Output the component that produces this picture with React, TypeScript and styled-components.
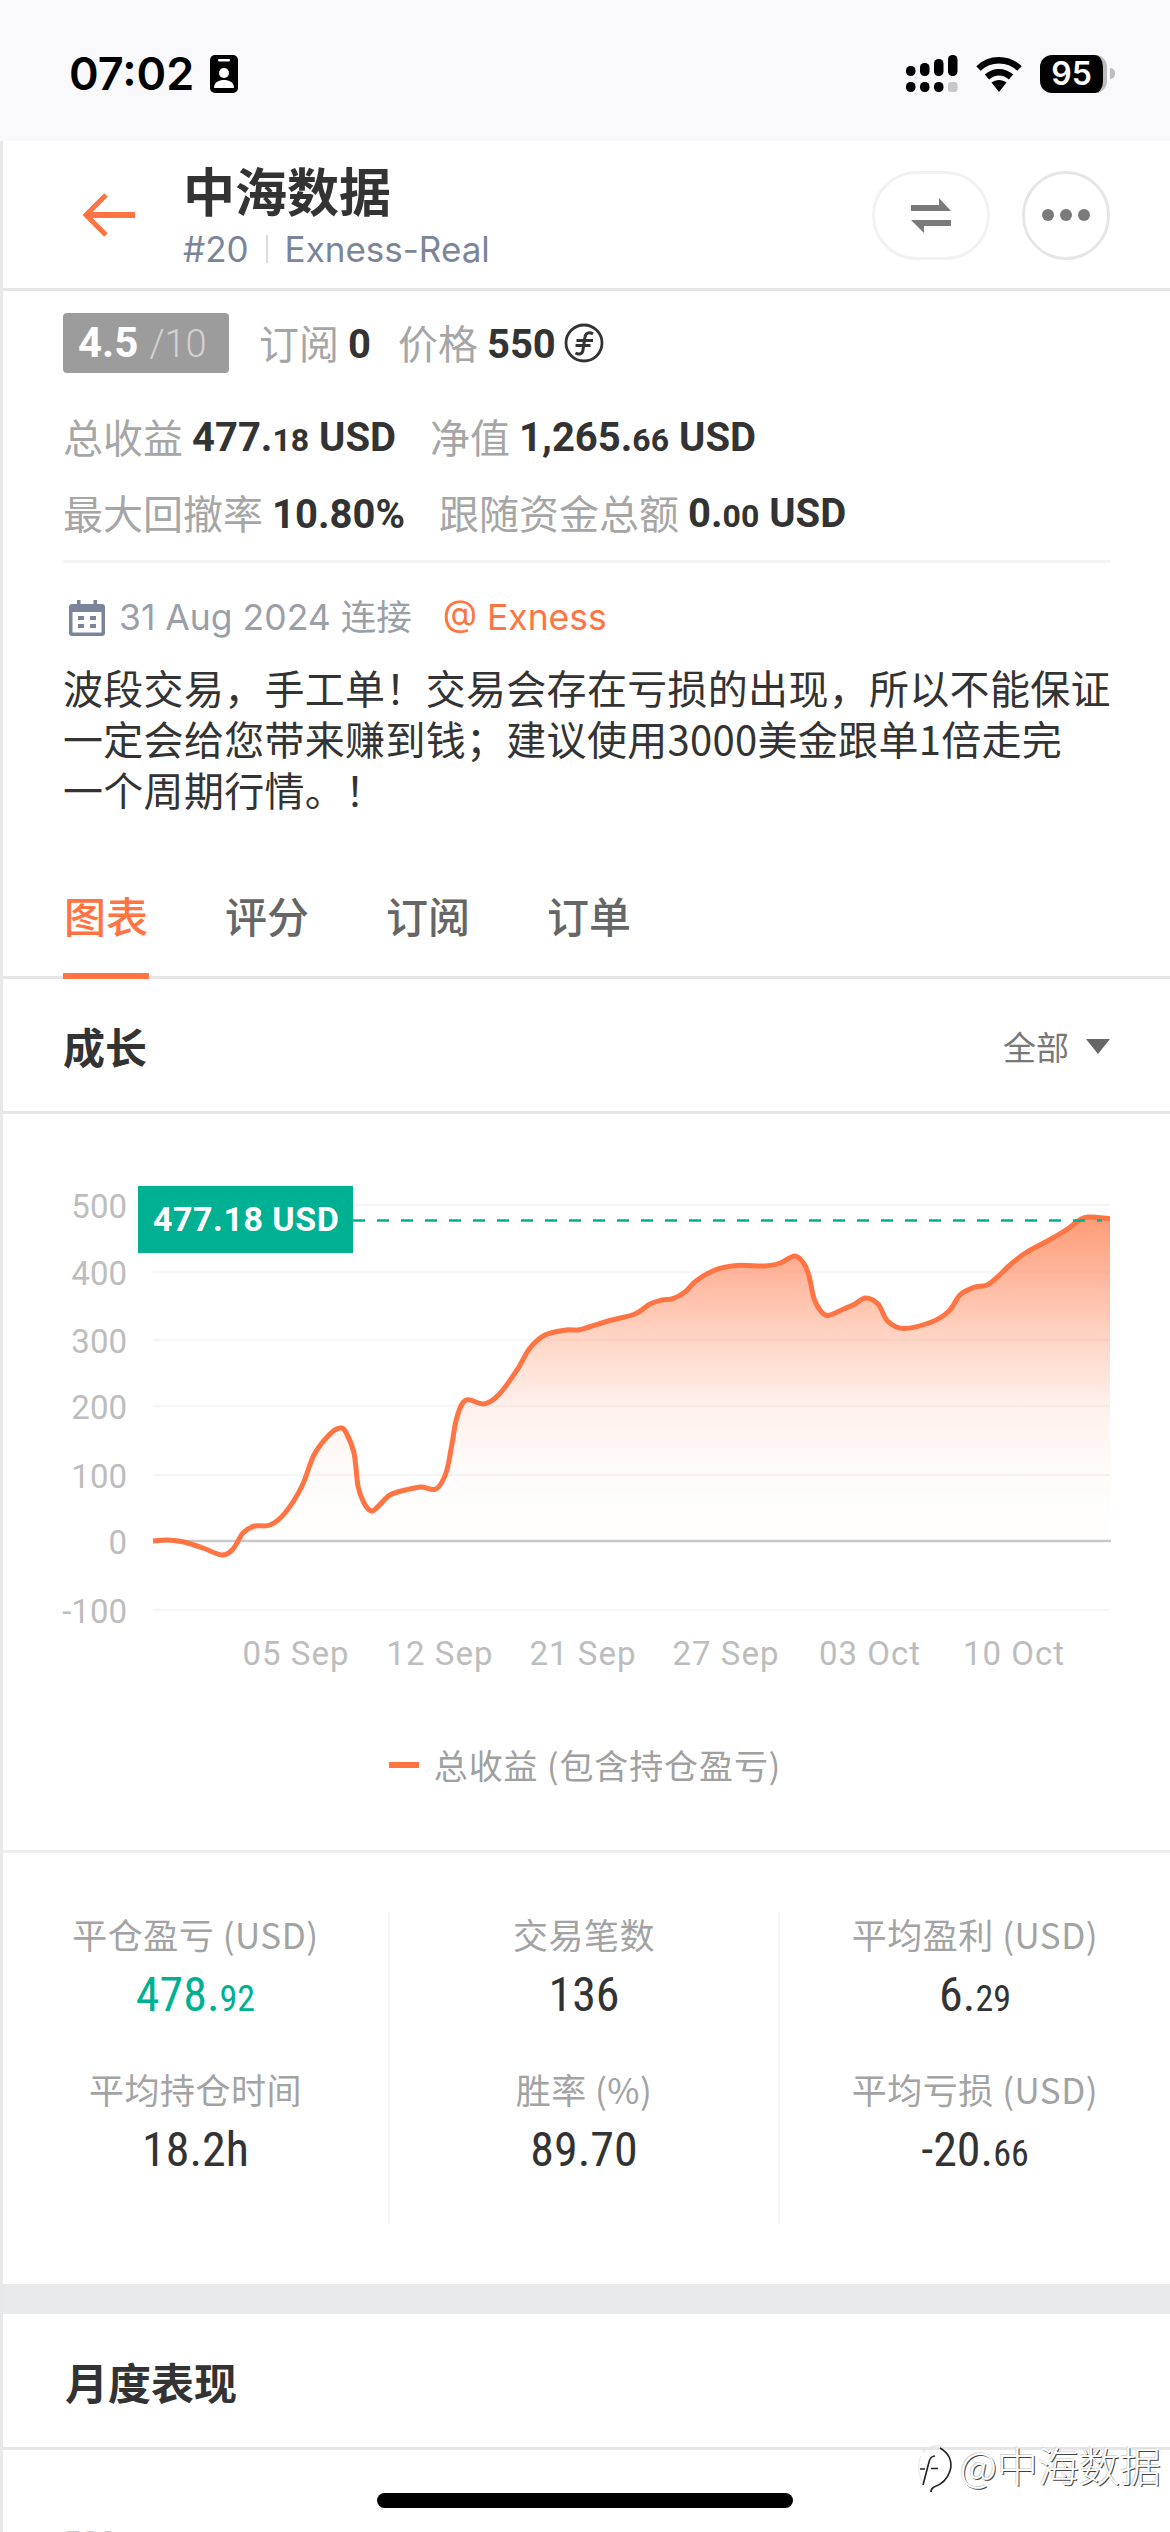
import { FC } from "react";
import styled, { createGlobalStyle } from "styled-components";

const ORANGE = "#ff7442";
const TEAL = "#00b092";
const CJK = `"Noto Sans CJK SC", sans-serif`;
const DIN = `Roboto, "Noto Sans CJK SC", sans-serif`;
const UI = `Inter, "Noto Sans CJK SC", sans-serif`;

const GlobalStyle = createGlobalStyle`
  html, body {
    margin: 0;
    padding: 0;
    width: 1170px;
    height: 2532px;
    overflow: hidden;
    background: #fff;
    font-family: ${CJK};
  }
`;

// profit curve, in page coordinates
const curve: [number, number][] = [
  [153, 1541], [168, 1540], [184, 1542], [203, 1548], [222, 1555], [233, 1549], [243, 1533],
  [254.5, 1526], [270, 1525], [285, 1513], [302, 1486], [314, 1455], [329, 1435], [340, 1428],
  [346, 1432.5], [354, 1453], [358, 1486], [363.5, 1502], [371, 1511], [377, 1507.5], [390, 1495],
  [405.6, 1490], [421, 1487], [436, 1489], [446, 1473], [451.6, 1446], [457, 1417], [466, 1400],
  [484, 1404], [499, 1394.5], [517, 1370], [530, 1348], [545, 1335], [566, 1330], [578, 1330],
  [589, 1327], [608, 1321], [635, 1314], [650, 1304], [662, 1300], [673, 1298.6], [685, 1292],
  [696, 1281], [715, 1270], [736.5, 1265.5], [765, 1266], [780.5, 1263], [794.6, 1256], [803.5, 1263],
  [809, 1276], [814, 1298.6], [820.7, 1311], [828, 1315.5], [843.6, 1309], [855, 1304], [865.4, 1298],
  [878, 1304], [887.6, 1321], [903, 1328.5], [931.6, 1322], [949, 1311], [960, 1295], [973.8, 1287.4],
  [987, 1285], [998.6, 1276], [1010, 1265], [1025.4, 1253], [1048.4, 1240.5], [1067.5, 1229],
  [1079, 1220.4], [1088.6, 1217], [1110, 1218.7],
];

const smoothPath = (pts: [number, number][]) => {
  let d = `M${pts[0][0]} ${pts[0][1]}`;
  for (let i = 0; i < pts.length - 1; i++) {
    const p0 = pts[i - 1] || pts[i];
    const p1 = pts[i];
    const p2 = pts[i + 1];
    const p3 = pts[i + 2] || p2;
    const c1x = p1[0] + (p2[0] - p0[0]) / 6;
    const c1y = p1[1] + (p2[1] - p0[1]) / 6;
    const c2x = p2[0] - (p3[0] - p1[0]) / 6;
    const c2y = p2[1] - (p3[1] - p1[1]) / 6;
    d += `C${c1x.toFixed(1)} ${c1y.toFixed(1)} ${c2x.toFixed(1)} ${c2y.toFixed(1)} ${p2[0]} ${p2[1]}`;
  }
  return d;
};

const linePath = smoothPath(curve);
const areaPath = `${linePath}L1110 1541L153 1541Z`;

const yTicks = [
  { label: "500", y: 1205 },
  { label: "400", y: 1272 },
  { label: "300", y: 1340 },
  { label: "200", y: 1406 },
  { label: "100", y: 1475 },
  { label: "0", y: 1541 },
  { label: "-100", y: 1610 },
];

const xTicks = [
  { label: "05 Sep", x: 296 },
  { label: "12 Sep", x: 440 },
  { label: "21 Sep", x: 583 },
  { label: "27 Sep", x: 726 },
  { label: "03 Oct", x: 870 },
  { label: "10 Oct", x: 1014 },
];

const stats = [
  [
    { label: "平仓盈亏 (USD)", big: "478.", small: "92", green: true },
    { label: "平均持仓时间", big: "18.2h", small: "" },
  ],
  [
    { label: "交易笔数", big: "136", small: "" },
    { label: "胜率 (%)", big: "89.70", small: "" },
  ],
  [
    { label: "平均盈利 (USD)", big: "6.", small: "29" },
    { label: "平均亏损 (USD)", big: "-20.", small: "66" },
  ],
];

const SignalIcon = () => (
  <svg width="52" height="38" viewBox="0 0 52 38" fill="#000">
    <rect x="0" y="11" width="9.5" height="10" rx="4.5" />
    <rect x="14" y="8" width="9.5" height="13" rx="4.5" />
    <rect x="28" y="4" width="9.5" height="17" rx="4.5" />
    <rect x="42" y="0" width="9.5" height="21" rx="4.5" />
    <rect x="0" y="27" width="9.5" height="10" rx="4.5" />
    <rect x="14" y="27" width="9.5" height="10" rx="4.5" />
    <rect x="28" y="27" width="9.5" height="10" rx="4.5" />
    <rect x="42" y="27" width="9.5" height="10" rx="3" fill="#c8c8c8" />
  </svg>
);

const WifiIcon = () => (
  <svg width="48" height="36" viewBox="0 0 48 36">
    <path d="M3.5 12.5C15 1.5 33 1.5 44.5 12.5" fill="none" stroke="#000" strokeWidth="6.5" />
    <path d="M12 21C19 14.5 29 14.5 36 21" fill="none" stroke="#000" strokeWidth="6.5" />
    <path d="M16.5 26.5C21 23 27 23 31.5 26.5L24 36Z" fill="#000" />
  </svg>
);

const BadgeIcon = () => (
  <svg width="28" height="38" viewBox="0 0 28 38">
    <rect width="28" height="38" rx="5" fill="#000" />
    <rect x="8" y="4" width="12" height="2.5" rx="1.2" fill="#fff" />
    <circle cx="14" cy="18" r="5" fill="#fff" />
    <path d="M4 33C4 27 9 25 14 25C19 25 24 27 24 33Z" fill="#fff" />
  </svg>
);

const BackIcon = () => (
  <svg width="54" height="44" viewBox="0 0 54 44" fill="none" stroke={ORANGE}>
    <path d="M24 2L4 22L24 42" strokeWidth="5" />
    <path d="M5 22H53" strokeWidth="6" />
  </svg>
);

const SwapIcon = () => (
  <svg width="40" height="35" viewBox="0 0 40 35" fill="#7a7a7a">
    <path d="M0 7H28V0L40 13H0Z" />
    <path d="M40 28H13V35L0 22H40Z" />
  </svg>
);

const DotsIcon = () => (
  <svg width="48" height="12" viewBox="0 0 48 12" fill="#7a7a7a">
    <circle cx="6" cy="6" r="6" />
    <circle cx="24" cy="6" r="6" />
    <circle cx="42" cy="6" r="6" />
  </svg>
);

const CoinIcon = () => (
  <svg width="40" height="40" viewBox="0 0 40 40" fill="none" stroke="#333">
    <circle cx="20" cy="20" r="18" strokeWidth="2.8" />
    <path d="M29 11C25 8.5 21.500 10 21 14L19 27C18.500 31 15 32 11.500 30" strokeWidth="3" />
    <path d="M12.500 17.500H29M11.500 22.500H26.500" strokeWidth="2.8" />
  </svg>
);

const CalendarIcon = () => (
  <svg width="36" height="36" viewBox="0 0 36 36" fill="#7a8599">
    <path d="M8 0H11.500V4H24.500V0H28V4H33C34.700 4 36 5.300 36 7V33C36 34.700 34.700 36 33 36H3C1.300 36 0 34.700 0 33V7C0 5.300 1.300 4 3 4H8ZM3.500 12V32.500H32.500V12Z" />
    <rect x="9" y="16" width="6" height="4" />
    <rect x="21" y="16" width="6" height="4" />
    <rect x="9" y="24" width="6" height="4" />
    <rect x="21" y="24" width="6" height="4" />
  </svg>
);

const WatermarkLogo = () => (
  <svg width="38" height="50" viewBox="0 0 38 50" fill="none">
    <path d="M7 8C14 1 24 0 30 5" stroke="#e8e8e8" strokeWidth="1.5" />
    <path d="M5 12C1 20 2 32 8 40" stroke="#ececec" strokeWidth="1.5" />
    <g stroke="#222" strokeWidth="1.6">
      <path d="M24 4C33 9 37 18 34 27C31 36 24 41 18 43C16 44 15 46 15 48" />
      <path d="M19 12C16 12 14 14 13 18L7 41" />
      <path d="M4 25H9M15 24.500H22" />
    </g>
  </svg>
);

const Num: FC<{ big: string; small?: string; unit?: string }> = ({ big, small, unit }) => (
  <Value>
    {big}
    {small && <Decimals>{small}</Decimals>}
    {unit && ` ${unit}`}
  </Value>
);

export default function App() {
  return (
    <>
      <GlobalStyle />
      <Page>
        <StatusBar>
          <StatusLeft>
            <Clock>07:02</Clock>
            <BadgeIcon />
          </StatusLeft>
          <StatusRight>
            <SignalIcon />
            <WifiIcon />
            <Battery>
              <BatteryBody>95</BatteryBody>
              <BatteryNub />
            </Battery>
          </StatusRight>
        </StatusBar>

        <Body>
          <NavBar>
            <BackButton>
              <BackIcon />
            </BackButton>
            <NavTitles>
              <NavTitle>中海数据</NavTitle>
              <NavSub>
                <span>#20</span>
                <NavSep />
                <span>Exness-Real</span>
              </NavSub>
            </NavTitles>
            <NavActions>
              <PillButton>
                <SwapIcon />
              </PillButton>
              <RoundButton>
                <DotsIcon />
              </RoundButton>
            </NavActions>
          </NavBar>

          <Info>
            <InfoRow $top={22}>
              <Score>
                4.5<ScoreMax>/10</ScoreMax>
              </Score>
              <Metric $gap={30}>
                <MetricLabel>订阅</MetricLabel>
                <Num big="0" />
              </Metric>
              <Metric $gap={27}>
                <MetricLabel>价格</MetricLabel>
                <Num big="550" />
                <CoinWrap>
                  <CoinIcon />
                </CoinWrap>
              </Metric>
            </InfoRow>
            <InfoRow $top={34}>
              <Metric>
                <MetricLabel>总收益</MetricLabel>
                <Num big="477." small="18" unit="USD" />
              </Metric>
              <Metric $gap={34}>
                <MetricLabel>净值</MetricLabel>
                <Num big="1,265." small="66" unit="USD" />
              </Metric>
            </InfoRow>
            <InfoRow $top={16}>
              <Metric>
                <MetricLabel>最大回撤率</MetricLabel>
                <Num big="10.80%" />
              </Metric>
              <Metric $gap={34}>
                <MetricLabel>跟随资金总额</MetricLabel>
                <Num big="0." small="00" unit="USD" />
              </Metric>
            </InfoRow>
            <InfoDivider />
            <DateRow>
              <CalendarIcon />
              <DateText>31 Aug 2024 连接</DateText>
              <Broker>@ Exness</Broker>
            </DateRow>
            <Description>
              波段交易，手工单！交易会存在亏损的出现，所以不能保证
              <br />
              一定会给您带来赚到钱；建议使用3000美金跟单1倍走完
              <br />
              一个周期行情。！
            </Description>
          </Info>

          <Tabs>
            <Tab $active>图表</Tab>
            <Tab>评分</Tab>
            <Tab>订阅</Tab>
            <Tab>订单</Tab>
          </Tabs>

          <SectionHead>
            <SectionTitle>成长</SectionTitle>
            <RangeSelect>
              全部
              <RangeCaret />
            </RangeSelect>
          </SectionHead>

          <ChartBlock>
            <ChartSvg viewBox="3 1114 1167 586">
              <defs>
                <linearGradient id="area" x1="0" y1="0" x2="0" y2="1">
                  <stop offset="0" stopColor={ORANGE} stopOpacity="0.72" />
                  <stop offset="0.36" stopColor={ORANGE} stopOpacity="0.3" />
                  <stop offset="0.56" stopColor={ORANGE} stopOpacity="0.1" />
                  <stop offset="0.78" stopColor={ORANGE} stopOpacity="0.02" />
                  <stop offset="1" stopColor={ORANGE} stopOpacity="0" />
                </linearGradient>
              </defs>
              {yTicks.map((t) => (
                <g key={t.label}>
                  <line
                    x1="153"
                    x2={t.label === "0" ? 1111 : 1110}
                    y1={t.y}
                    y2={t.y}
                    stroke={t.label === "0" ? "#c8c8c8" : "#f6f6f6"}
                    strokeWidth="2.500"
                  />
                  <AxisText x="127" y={t.y + 13} textAnchor="end">
                    {t.label}
                  </AxisText>
                </g>
              ))}
              {xTicks.map((t) => (
                <AxisText key={t.label} x={t.x} y="1665" textAnchor="middle" letterSpacing="1">
                  {t.label}
                </AxisText>
              ))}
              <path d={areaPath} fill="url(#area)" />
              <path d={linePath} fill="none" stroke={ORANGE} strokeWidth="5" strokeLinejoin="round" />
              <line x1="353" x2="1102" y1="1220.500" y2="1220.500" stroke={TEAL} strokeWidth="2.500" strokeDasharray="12 12" />
              <rect x="138" y="1186" width="215" height="67" fill={TEAL} />
              <PriceTag x="153" y="1231">477.18 USD</PriceTag>
            </ChartSvg>
            <Legend>
              <LegendDash />
              总收益 (包含持仓盈亏)
            </Legend>
          </ChartBlock>

          <StatsBlock>
            <StatsGrid>
              {stats.map((col, i) => (
                <StatsColumn key={i} $last={i === 2}>
                  {col.map((s) => (
                    <Stat key={s.label}>
                      <StatLabel>{s.label}</StatLabel>
                      <StatValue $green={"green" in s && s.green}>
                        {s.big}
                        {s.small && <StatDecimals>{s.small}</StatDecimals>}
                      </StatValue>
                    </Stat>
                  ))}
                </StatsColumn>
              ))}
            </StatsGrid>
          </StatsBlock>

          <Band />

          <MonthlyHead>月度表现</MonthlyHead>
          <MonthlyChart>500</MonthlyChart>
        </Body>

        <Watermark>
          <WatermarkLogo />
          <WatermarkText>@中海数据</WatermarkText>
        </Watermark>
        <HomeIndicator />
      </Page>
    </>
  );
}

const Page = styled.div`
  position: relative;
  width: 1170px;
  height: 2532px;
  overflow: hidden;
  background: #fff;
`;

const StatusBar = styled.div`
  height: 141px;
  box-sizing: border-box;
  padding: 6px 55px 0 69px;
  background: #f9f9fb;
  display: flex;
  align-items: center;
  justify-content: space-between;
`;

const StatusLeft = styled.div`
  display: flex;
  align-items: center;
  gap: 16px;
`;

const Clock = styled.div`
  font: 600 45px/50px ${UI};
  color: #000;
`;

const StatusRight = styled.div`
  display: flex;
  align-items: center;
  gap: 17px;
`;

const Battery = styled.div`
  display: flex;
  align-items: center;
  gap: 3px;
`;

const BatteryBody = styled.div`
  width: 67px;
  height: 38px;
  box-sizing: border-box;
  border-radius: 12px;
  border-right: 4px solid #bdbdbd;
  background: #000;
  color: #fff;
  font: 600 32px/38px ${UI};
  text-align: center;
`;

const BatteryNub = styled.div`
  width: 5px;
  height: 11px;
  border-radius: 0 5px 5px 0;
  background: #bdbdbd;
`;

const Body = styled.div`
  border-left: 3px solid #e8e8e8;
`;

const NavBar = styled.div`
  height: 150px;
  box-sizing: border-box;
  padding: 0 60px 0 79px;
  border-bottom: 3px solid #e6e6e6;
  display: flex;
  align-items: center;
`;

const BackButton = styled.div`
  width: 54px;
  height: 44px;
  display: flex;
  margin-right: 47px;
`;

const NavTitles = styled.div`
  flex: 1;
  padding-bottom: 1px;
`;

const NavTitle = styled.div`
  font: 700 52px/60px ${CJK};
  color: #333;
`;

const NavSub = styled.div`
  margin-top: 9px;
  display: flex;
  align-items: center;
  gap: 17px;
  font: 400 35px/40px ${UI};
  color: #7a8599;
`;

const NavSep = styled.i`
  width: 2px;
  height: 28px;
  background: #dcdcdc;
`;

const NavActions = styled.div`
  display: flex;
  align-items: center;
  gap: 32px;
  margin-top: 1px;
`;

const PillButton = styled.div`
  width: 118px;
  height: 89px;
  box-sizing: border-box;
  border: 3px solid #f2f2f2;
  border-radius: 45px;
  display: flex;
  align-items: center;
  justify-content: center;
`;

const RoundButton = styled(PillButton)`
  width: 88px;
  border-color: #e6e6e6;
`;

const Info = styled.div`
  padding: 0 60px;
`;

const InfoRow = styled.div<{ $top: number }>`
  display: flex;
  align-items: center;
  height: 60px;
  margin-top: ${(p) => p.$top}px;
`;

const Score = styled.div`
  width: 166px;
  height: 60px;
  box-sizing: border-box;
  padding-left: 15px;
  border-radius: 4px;
  background: #9c9c9c;
  color: #fff;
  font: 700 42px/60px ${DIN};
`;

const ScoreMax = styled.span`
  margin-left: 11px;
  font-weight: 300;
  font-size: 38px;
  opacity: 0.55;
`;

const Metric = styled.div<{ $gap?: number }>`
  display: flex;
  align-items: center;
  gap: 9px;
  margin-left: ${(p) => p.$gap ?? 0}px;
`;

const MetricLabel = styled.span`
  margin-bottom: 2px;
  font: 400 40px/60px ${CJK};
  color: #a6a6a6;
`;

const Value = styled.span`
  margin-top: 3px;
  font: 700 40px/60px ${DIN};
  color: #333;
  white-space: pre;
`;

const Decimals = styled.span`
  font-size: 32px;
`;

const CoinWrap = styled.span`
  display: flex;
  margin-left: -1px;
`;

const InfoDivider = styled.div`
  height: 3px;
  margin-top: 17px;
  background: #f4f4f4;
`;

const DateRow = styled.div`
  display: flex;
  align-items: center;
  height: 50px;
  margin-top: 30px;
  padding-left: 6px;
`;

const DateText = styled.span`
  margin-left: 14px;
  font: 400 35.5px/50px ${UI};
  color: #9a9fa8;
`;

const Broker = styled.span`
  margin-left: 31px;
  font: 400 35.5px/50px ${UI};
  color: ${ORANGE};
`;

const Description = styled.div`
  margin-top: 19px;
  font: 400 40px/51px ${CJK};
  letter-spacing: 0.3px;
  white-space: nowrap;
  color: #333;
`;

const Tabs = styled.div`
  display: flex;
  gap: 75px;
  padding: 70px 60px 0;
  border-bottom: 3px solid #e6e6e6;
`;

const Tab = styled.div<{ $active?: boolean }>`
  position: relative;
  width: 86px;
  padding-bottom: 31px;
  text-align: center;
  font: 500 42px/60px ${CJK};
  color: ${(p) => (p.$active ? ORANGE : "#666")};

  &::after {
    content: "";
    display: ${(p) => (p.$active ? "block" : "none")};
    position: absolute;
    left: 0;
    right: 0;
    bottom: -3px;
    height: 6px;
    background: ${ORANGE};
  }
`;

const SectionHead = styled.div`
  height: 135px;
  box-sizing: border-box;
  padding: 2px 60px 0;
  border-bottom: 3px solid #e6e6e6;
  display: flex;
  align-items: center;
  justify-content: space-between;
`;

const SectionTitle = styled.div`
  font: 700 42px/60px ${CJK};
  color: #333;
`;

const RangeSelect = styled.div`
  display: flex;
  align-items: center;
  gap: 17px;
  font: 400 33px/50px ${CJK};
  color: #777;
`;

const RangeCaret = styled.i`
  width: 0;
  height: 0;
  border-left: 12px solid transparent;
  border-right: 12px solid transparent;
  border-top: 15px solid #666;
`;

const ChartBlock = styled.div`
  height: 736px;
  box-sizing: border-box;
`;

const ChartSvg = styled.svg`
  display: block;
  width: 1167px;
  height: 586px;
`;

const AxisText = styled.text`
  font: 400 33px ${DIN};
  fill: #bdbdbd;
`;

const PriceTag = styled.text`
  font: 700 34px ${DIN};
  letter-spacing: 0.5px;
  fill: #fff;
`;

const Legend = styled.div`
  display: flex;
  align-items: center;
  justify-content: center;
  gap: 15px;
  height: 50px;
  margin-top: 40px;
  padding-right: 3px;
  font: 400 34px/50px ${CJK};
  letter-spacing: 0.9px;
  color: #a0a0a0;
`;

const LegendDash = styled.i`
  width: 30px;
  height: 6px;
  background: ${ORANGE};
`;

const StatsBlock = styled.div`
  border-top: 3px solid #eeeeee;
  padding: 59px 0 60px;
`;

const StatsGrid = styled.div`
  display: grid;
  grid-template-columns: 387px 390px 390px;
  height: 312px;
`;

const StatsColumn = styled.div<{ $last?: boolean }>`
  padding-top: 2px;
  text-align: center;
  border-right: ${(p) => (p.$last ? "none" : "2px solid #f5f5f5")};
`;

const Stat = styled.div`
  height: 155px;
`;

const StatLabel = styled.div`
  font: 400 35px/40px ${CJK};
  letter-spacing: 0.5px;
  color: #a3a3a3;
`;

const StatValue = styled.div<{ $green?: boolean }>`
  margin-top: 11px;
  font: 440 48px/60px ${DIN};
  font-stretch: 87%;
  color: ${(p) => (p.$green ? TEAL : "#333")};
`;

const StatDecimals = styled.span`
  font-size: 36px;
`;

const Band = styled.div`
  height: 30px;
  background: #e9eaec;
`;

const MonthlyHead = styled.div`
  height: 136px;
  box-sizing: border-box;
  padding: 0 62px;
  border-bottom: 3px solid #e6e6e6;
  display: flex;
  align-items: center;
  font: 700 43px/60px ${CJK};
  color: #333;
`;

const MonthlyChart = styled.div`
  padding: 72px 60px 0;
  font: 400 32px/40px ${DIN};
  color: #c8c8c8;
`;

const Watermark = styled.div`
  position: absolute;
  top: 2444px;
  right: 9px;
  display: flex;
  align-items: flex-start;
  gap: 6px;
`;

const WatermarkText = styled.div`
  margin-top: -2px;
  font: 300 41px/44px ${CJK};
  color: #fff;
  text-shadow: 1px 1px 0 #444, -1px -1px 0 #d8d8d8;
`;

const HomeIndicator = styled.div`
  position: absolute;
  left: 377px;
  top: 2493px;
  width: 416px;
  height: 15px;
  border-radius: 8px;
  background: #000;
`;
